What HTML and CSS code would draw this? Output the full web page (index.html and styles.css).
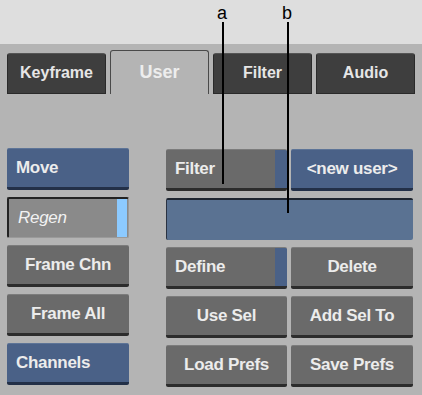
FILE: index.html
```html
<!doctype html>
<html>
  <head>
    <title>User</title>
    <link rel="stylesheet" href="styles.css">
  </head>
  <body>
    <div class=top>
      <span class="call ca">a</span>
      <span class="call cb">b</span>
      <i class="line la"></i>
      <i class="line lb"></i>
    </div>
    <div class=panel>
      <div class=tabs>
        <div class=tab>Keyframe</div>
        <div class="tab on">User</div>
        <div class=tab>Filter</div>
        <div class=tab>Audio</div>
      </div>
      <div class=cols>
        <div class=side>
          <div class="btn blue left">Move</div>
          <div class="btn regen left">Regen</div>
          <div class=btn>Frame Chn</div>
          <div class=btn>Frame All</div>
          <div class="btn blue left">Channels</div>
        </div>
        <div class=grid>
          <div class="btn strip left">Filter</div>
          <div class="btn blue">&lt;new user&gt;</div>
          <div class="field"></div>
          <div class="btn strip left">Define</div>
          <div class=btn>Delete</div>
          <div class=btn>Use Sel</div>
          <div class=btn>Add Sel To</div>
          <div class=btn>Load Prefs</div>
          <div class=btn>Save Prefs</div>
        </div>
      </div>
    </div>
  </body>
</html>
```

FILE: styles.css
```css
* {
  box-sizing: border-box;
  margin: 0;
  padding: 0;
}

body {
  width: 422px;
  height: 395px;
  background: #b4b4b4;
  font-family: "Liberation Sans", Arial, sans-serif;
  overflow: hidden;
  position: relative;
}

.top {
  height: 44px;
  background: #dedede;
}

.call {
  position: absolute;
  top: 3px;
  font: 18px "Liberation Sans", Arial, sans-serif;
  color: #000;
  z-index: 2;
}

.ca { left: 217px; }
.cb { left: 282px; }

.line {
  position: absolute;
  top: 22px;
  width: 2px;
  background: #000;
  z-index: 2;
}

.la { left: 222px; height: 162px; }
.lb { left: 287px; height: 191px; }

.panel {
  padding: 6px 7px 0;
}

.tabs {
  display: flex;
  align-items: flex-end;
  gap: 4px;
  height: 44px;
}

.tab {
  width: 99px;
  height: 41px;
  background: #3e3e3e;
  border: 1px solid #2a2a2a;
  border-top-color: #555;
  border-radius: 3px 3px 0 0;
  color: #e6e6e6;
  font-weight: bold;
  font-size: 16px;
  display: flex;
  align-items: center;
  justify-content: center;
  padding-bottom: 2px;
}

.tab.on {
  height: 44px;
  background: #b4b4b4;
  border: 1px solid #4a4a4a;
  border-bottom: none;
  color: #ededed;
  font-size: 18px;
  padding-top: 2px;
}

.cols {
  display: flex;
  gap: 37px;
  margin-top: 54px;
}

.side {
  width: 122px;
  display: flex;
  flex-direction: column;
  gap: 7px;
}

.side .btn {
  height: 42px;
}

.grid {
  display: grid;
  grid-template-columns: 121px 122px;
  grid-auto-rows: 42px;
  gap: 7px 4px;
  padding-top: 1px;
}

.btn {
  background: #6a6a6a;
  border-top: 1px solid #7c7c7c;
  border-bottom: 3px solid #2c2c2c;
  border-radius: 2px;
  color: #ececec;
  font-weight: bold;
  font-size: 17px;
  letter-spacing: -0.3px;
  display: flex;
  align-items: center;
  justify-content: center;
}

.btn.left {
  justify-content: flex-start;
  padding-left: 9px;
}

.btn.blue {
  background: #4a6187;
  border-top-color: #5d7497;
  border-bottom-color: #233048;
}

.btn.strip {
  background: linear-gradient(to right, #6a6a6a 0, #6a6a6a 109px, #4a6187 109px);
}

.btn.regen {
  background: linear-gradient(to right, #8a8a8a 0, #8a8a8a 108px, #8ccaff 108px, #8ccaff 118px, #8a8a8a 118px);
  border: 1px solid #9a9a9a;
  border-top: 2px solid #222;
  border-left: 2px solid #222;
  font-style: italic;
  font-weight: normal;
  color: #f2f2f2;
  height: 41px;
}

.field {
  grid-column: span 2;
  background: #5a7292;
  border-top: 2px solid #1e2530;
  border-left: 1px solid #2a3342;
  border-radius: 2px;
}
```
